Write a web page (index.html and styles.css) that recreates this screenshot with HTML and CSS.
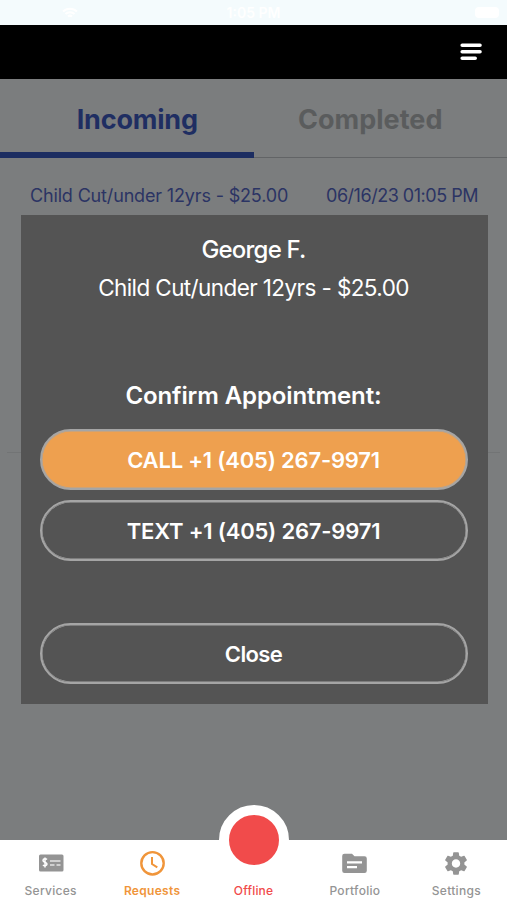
FILE: index.html
```html
<!DOCTYPE html>
<html lang="en">
<head>
    <meta charset="UTF-8">
    <meta name="viewport" content="width=device-width, initial-scale=1.0">
    <title>Requests</title>
    <link rel="stylesheet" href="styles.css">
</head>
<body>
    <div class="app">
        <div class="status-bar">
            <svg class="status-wifi" viewBox="0 0 16 12"><path d="M1 4.5a10 10 0 0 1 14 0M3.5 7a6.500 6.500 0 0 1 9 0M6 9.500a3 3 0 0 1 4 0"/></svg>
            <span class="status-time">1:05 PM</span>
            <span class="battery"></span>
        </div>

        <div class="header">
            <svg class="menu-icon" viewBox="0 0 22 18">
                <path d="M2.200 2.200h17.800M2.200 8.700h17.800M2.200 15.200h13"/>
            </svg>
        </div>

        <div class="content">
            <div class="tabs">
                <div class="tab active">Incoming</div>
                <div class="tab">Completed</div>
            </div>
            <div class="request">
                <span class="request-service">Child Cut/under 12yrs - $25.00</span>
                <span class="request-date">06/16/23 01:05 PM</span>
            </div>

            <div class="modal">
                <div class="client-name">George F.</div>
                <div class="client-service">Child Cut/under 12yrs - $25.00</div>
                <div class="modal-title">Confirm Appointment:</div>
                <button class="btn call">CALL +1 (405) 267-9971</button>
                <button class="btn text">TEXT +1 (405) 267-9971</button>
                <button class="btn close">Close</button>
            </div>
        </div>

        <div class="nav">
            <div class="nav-item">
                <svg class="nav-icon" viewBox="0 0 28 28">
                    <rect x="2" y="5.500" width="24.500" height="17" rx="1.500" fill="#949494"/>
                    <path d="M10 10.500c-1-1-4-1-4 .9 0 2.100 4 1.600 4 3.700 0 1.900-3 2-4 .8M8 8.500v10" stroke="#fff" stroke-width="1.500" fill="none"/>
                    <path d="M13 12h10.500M13 16h4.500M19.500 16h4" stroke="#e2e2e2" stroke-width="1.500"/>
                </svg>
                <span class="nav-label">Services</span>
            </div>
            <div class="nav-item active">
                <svg class="nav-icon" viewBox="0 0 28 28">
                    <circle cx="14.500" cy="14.300" r="11.200" fill="none" stroke="#f0953a" stroke-width="2.400"/>
                    <path d="M14 8v7l5.300 3.300" fill="none" stroke="#f0953a" stroke-width="2"/>
                </svg>
                <span class="nav-label">Requests</span>
            </div>
            <div class="nav-item offline">
                <span class="record"></span>
                <span class="nav-label">Offline</span>
            </div>
            <div class="nav-item">
                <svg class="nav-icon" viewBox="0 0 28 28">
                    <path d="M3.500 4.700h7.500l2.500 2.500h10a2.300 2.300 0 0 1 2.300 2.300v12.200a2.300 2.300 0 0 1-2.300 2.300H3.500a2.300 2.300 0 0 1-2.300-2.300V7a2.300 2.300 0 0 1 2.300-2.300z" fill="#949494"/>
                    <path d="M6 13.300h15M6 18.100h10" stroke="#fff" stroke-width="2.300"/>
                </svg>
                <span class="nav-label">Portfolio</span>
            </div>
            <div class="nav-item">
                <svg class="nav-icon gear" viewBox="0 0 24 24">
                    <path fill="#949494" d="M19.140 12.940c.04-.3.060-.61.060-.94 0-.32-.02-.64-.07-.94l2.030-1.580a.49.49 0 0 0 .12-.61l-1.920-3.320a.488.488 0 0 0-.59-.22l-2.390.96c-.5-.38-1.030-.7-1.620-.94l-.36-2.540a.484.484 0 0 0-.48-.41h-3.840c-.24 0-.43.17-.47.41l-.36 2.540c-.59.24-1.130.57-1.620.94l-2.390-.96c-.22-.08-.47 0-.59.22L2.740 8.870c-.12.210-.08.470.12.610l2.030 1.580c-.05.300-.09.630-.09.940s.02.640.070.940l-2.030 1.580a.49.490 0 0 0-.12.610l1.920 3.320c.12.220.370.290.590.220l2.390-.96c.5.380 1.030.7 1.620.940l.360 2.540c.05.240.240.410.480.410h3.840c.240 0 .440-.17.470-.41l.360-2.540c.590-.24 1.130-.56 1.620-.94l2.390.96c.220.080.470 0 .590-.22l1.920-3.320c.12-.22.070-.47-.12-.61l-2.010-1.580zM12 15.600c-1.980 0-3.600-1.620-3.600-3.600s1.620-3.600 3.600-3.600 3.600 1.620 3.600 3.600-1.620 3.600-3.600 3.600z"/>
                </svg>
                <span class="nav-label">Settings</span>
            </div>
        </div>
    </div>
</body>
</html>
```
FILE: styles.css
```css
* {
    box-sizing: border-box;
}

body {
    margin: 0;
    font-family: Inter, "Liberation Sans", sans-serif;
    background: #7b7d7e;
}

.app {
    display: flex;
    flex-direction: column;
    height: 900px;
    overflow: hidden;
}

.status-bar {
    display: grid;
    grid-template-columns: 1fr auto 1fr;
    align-items: center;
    height: 25px;
    padding: 0 8px 0 62px;
    background: #f4fbfd;
    color: #fff;
}

.status-wifi {
    width: 16px;
    height: 12px;
    fill: none;
    stroke: #fff;
    stroke-width: 2;
}

.status-time {
    margin-right: 54px;
    font-size: 14px;
    font-weight: 600;
}

.battery {
    justify-self: end;
    width: 24px;
    height: 11px;
    border-radius: 4px;
    background: #fff;
}

.header {
    display: flex;
    align-items: center;
    justify-content: flex-end;
    height: 54px;
    padding: 0 25px 0 0;
    background: #000;
}

.menu-icon {
    width: 22px;
    height: 18px;
    fill: none;
    stroke: #fff;
    stroke-width: 3.6;
    stroke-linecap: round;
}

.content {
    position: relative;
    flex: 1;
    background: #7b7d7e;
}

.tabs {
    display: flex;
    height: 79px;
    border-bottom: 1px solid #626466;
}

.tab {
    display: flex;
    align-items: center;
    justify-content: center;
    width: 50%;
    height: 79px;
    padding: 6px 20px 5px 0;
    color: #5a5c5d;
    font-size: 27px;
    font-weight: 700;
}

.tab.active {
    padding: 8px 0 0 21px;
    border-bottom: 6px solid #1c2d61;
    color: #1f2e62;
    letter-spacing: -0.2px;
}

.request {
    display: flex;
    justify-content: space-between;
    height: 295px;
    padding: 27px 22px 0 23px;
    margin: 0 7px;
    border-bottom: 1px solid #727475;
    color: #2b3464;
    font-size: 18px;
    line-height: 22px;
    letter-spacing: -0.16px;
    white-space: nowrap;
}

.request-date {
    letter-spacing: -0.48px;
}

/* dialog sits over the request list */
.modal {
    position: absolute;
    top: 136px;
    left: 20.5px;
    display: flex;
    flex-direction: column;
    width: 467px;
    height: 489px;
    padding: 19px 20px 0 19px;
    background: #545454;
    color: #fff;
    text-align: center;
}

.client-name {
    font-size: 24px;
    font-weight: 500;
    line-height: 32px;
    letter-spacing: -0.8px;
}

.client-service {
    margin-top: 7px;
    font-size: 22.5px;
    line-height: 30px;
    letter-spacing: -0.6px;
}

.modal-title {
    margin-top: 78px;
    font-size: 24px;
    font-weight: 600;
    line-height: 30px;
    letter-spacing: -0.1px;
}

.btn {
    flex: none;
    height: 61px;
    padding: 0;
    border: 2px solid #a5a5a5;
    border-radius: 31px;
    background: transparent;
    box-shadow: inset 0 0 0 0.5px #a5a5a5;
    color: #fff;
    font-family: inherit;
    font-size: 22px;
    font-weight: 600;
    letter-spacing: -0.2px;
}

.btn.call {
    margin-top: 18px;
    background: #eea04f;
}

.btn.text {
    margin-top: 10px;
}

.btn.close {
    margin-top: 62px;
    letter-spacing: -0.6px;
}

.nav {
    display: flex;
    height: 60px;
    background: #fff;
}

.nav-item {
    position: relative;
    display: flex;
    flex: 1;
    flex-direction: column;
    align-items: center;
    padding-top: 9px;
    color: #949494;
}

.nav-item.active {
    color: #f0953a;
}

.nav-item.offline {
    justify-content: flex-end;
    color: #f14b4b;
}

.nav-icon {
    width: 28px;
    height: 28px;
}

.gear {
    height: 29px;
    margin-bottom: -1px;
}

.nav-label {
    height: 16px;
    margin-top: 6px;
    font-size: 12px;
    font-weight: 500;
    line-height: 16px;
    letter-spacing: 0.3px;
}

.active .nav-label {
    font-weight: 600;
}

.offline .nav-label {
    margin-bottom: 1px;
    letter-spacing: 0.2px;
}

.record {
    position: absolute;
    top: -35px;
    left: 50%;
    width: 70px;
    height: 70px;
    margin-left: -35px;
    border: 10.500px solid #fff;
    border-radius: 50%;
    background: #f14b4b;
}
```
